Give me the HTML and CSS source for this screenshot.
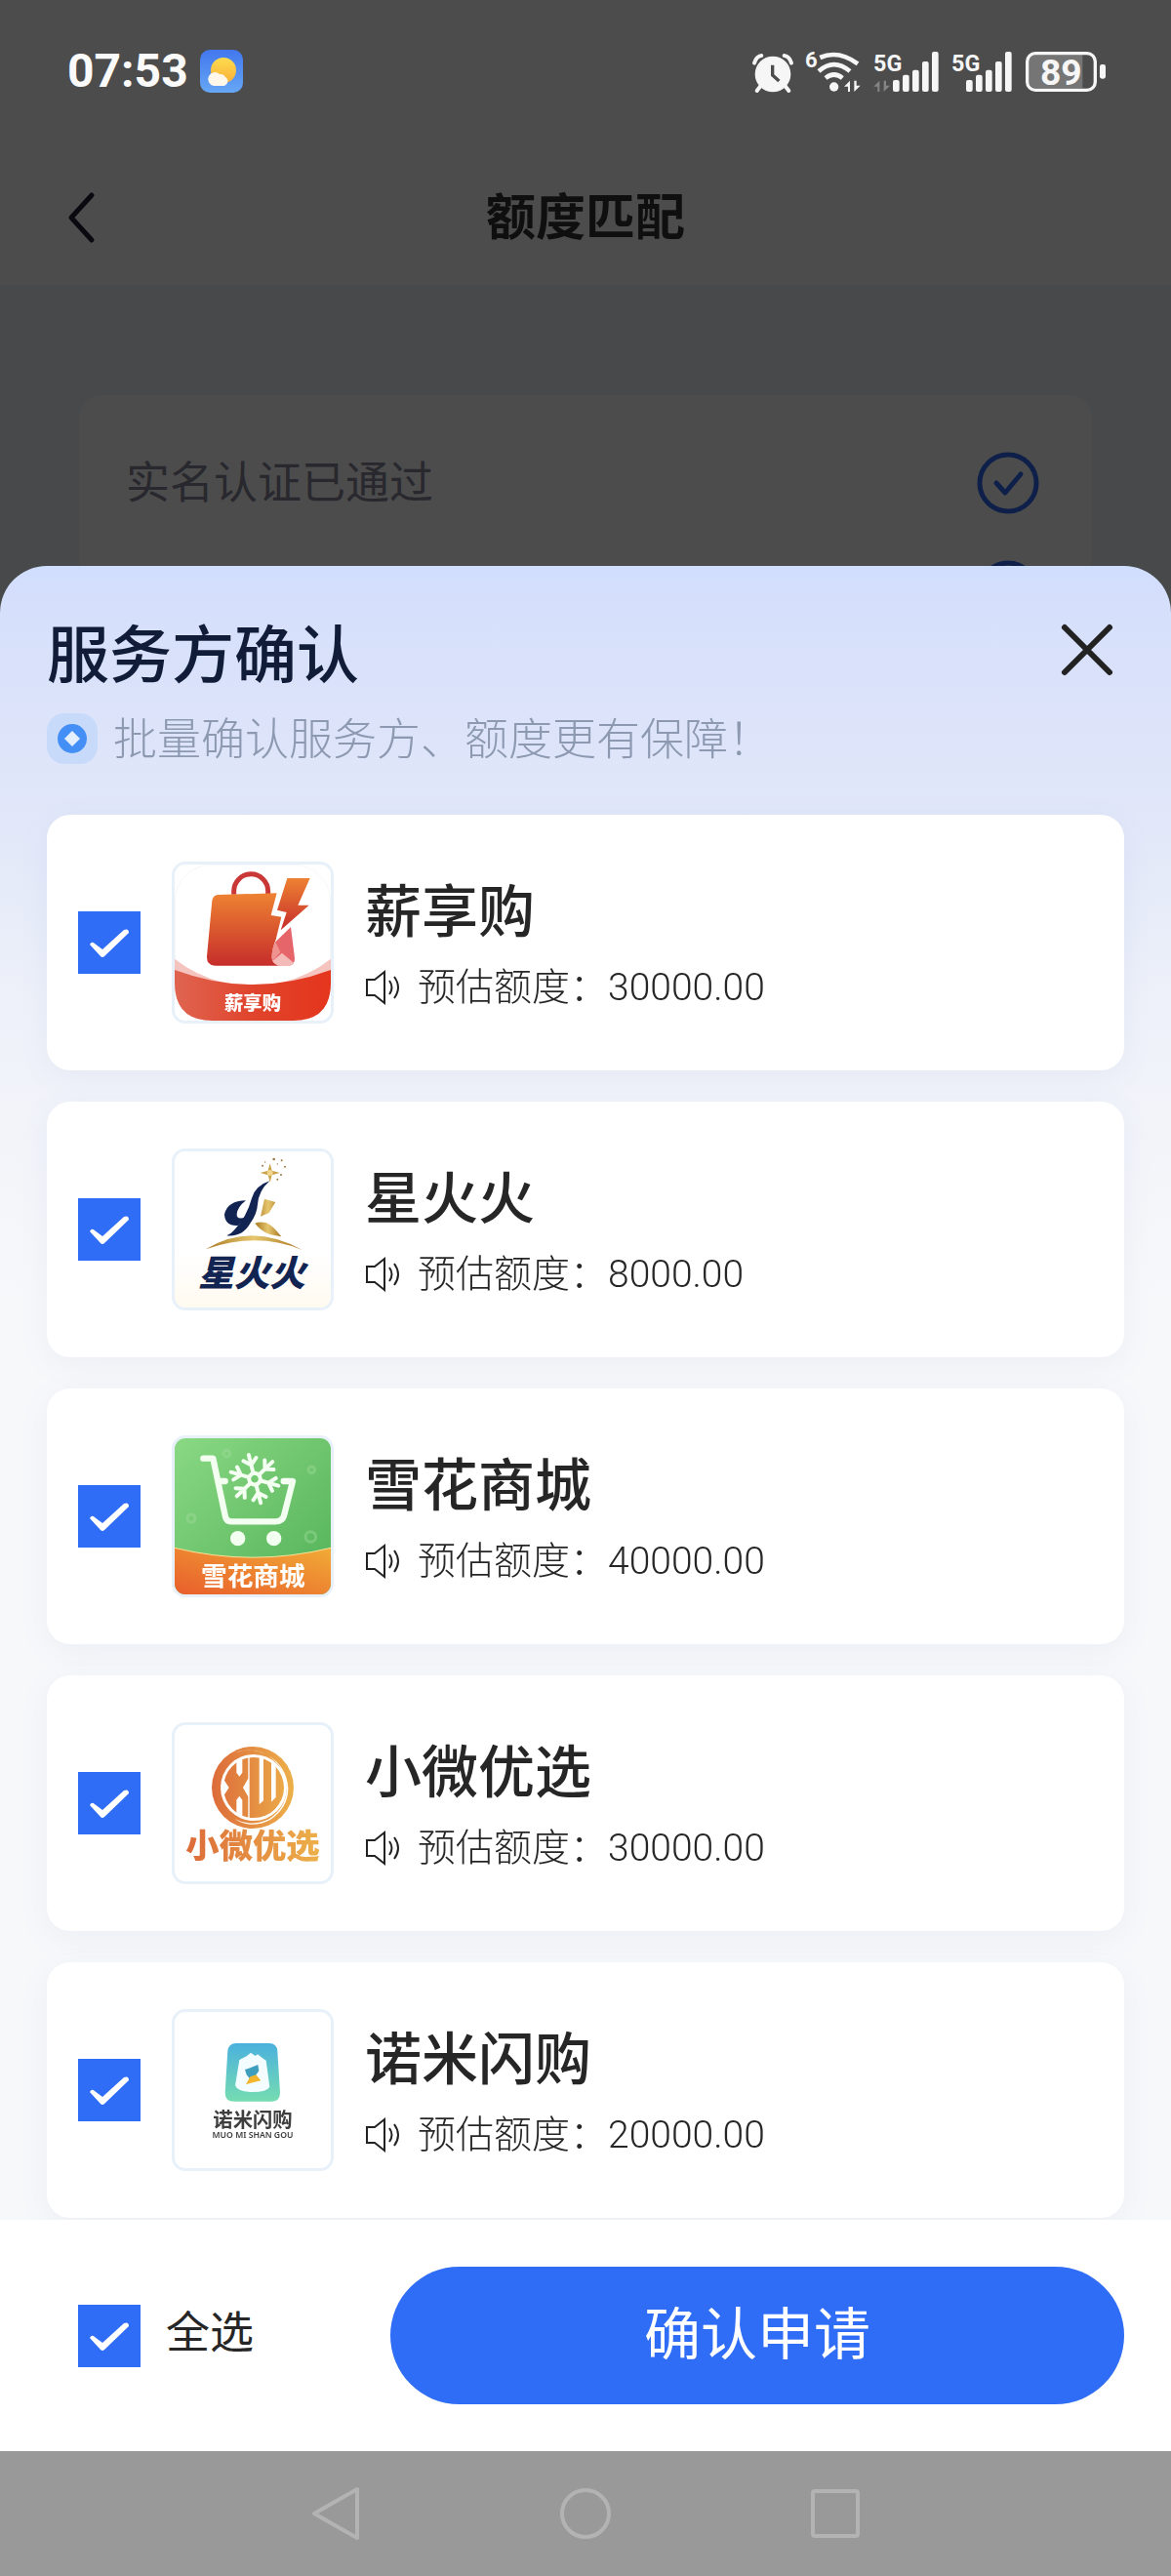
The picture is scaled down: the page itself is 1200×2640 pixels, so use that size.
FILE: index.html
```
<!DOCTYPE html>
<html lang="zh-CN">
<head>
    <meta charset="UTF-8">
    <meta name="viewport" content="width=device-width, initial-scale=1.0">
    <title>额度匹配</title>
    <link rel="stylesheet" href="styles.css">
</head>
<body>

    <!-- Status bar -->
    <div class="status-bar">
        <div class="status-left">
            <span class="time">07:53</span>
            <svg class="weather" viewBox="0 0 44 44">
                <defs>
                    <linearGradient id="sky" x2="0" y2="1"><stop stop-color="#4277ee"/><stop offset="1" stop-color="#66a7f5"/></linearGradient>
                    <linearGradient id="sun" x2="0" y2="1"><stop stop-color="#ffdc4e"/><stop offset="1" stop-color="#f7b03a"/></linearGradient>
                </defs>
                <rect width="44" height="44" rx="10" fill="url(#sky)"/>
                <circle cx="24" cy="21" r="13" fill="url(#sun)"/>
                <path d="M14 37a7 7 0 1 1 6-12 6 6 0 0 1 6 3 5 5 0 0 1-1 9z" fill="#fff8ea"/>
            </svg>
        </div>
        <div class="status-right">
            <svg width="42" height="45" viewBox="98 60 126 135">
                <circle cx="161" cy="135" r="55" fill="#f6f6f6"/>
                <path d="M104 101q6-21 22-23M218 101q-6-21-22-23M123 172l-11 14M199 172l11 14" stroke="#f6f6f6" stroke-width="12" stroke-linecap="round" fill="none"/>
                <path d="M160 107v31l20 18" stroke="#4c4c4c" stroke-width="10" fill="none"/>
            </svg>
            <svg width="58" height="45" viewBox="260 60 174 135">
                <text x="260" y="113" class="svg-num" font-size="66">6</text>
                <g fill="none" stroke="#f6f6f6" stroke-width="14">
                    <path d="M306 84q56-25 116 19"/>
                    <path d="M302 126q46-41 96 0"/>
                    <path d="M323 147q26-21 52 0"/>
                </g>
                <circle cx="349" cy="174" r="14" fill="#f6f6f6"/>
                <path d="M380 173l18-18v34h-6v-16zM411 155h7v15h12l-19 19z" fill="#f6f6f6"/>
            </svg>
            <svg width="68" height="45" viewBox="462 60 204 135">
                <text x="462" y="127" class="svg-num" font-size="70">5G</text>
                <path d="M463 173l18-18v34h-6v-16zM494 155h7v15h12l-19 19z" fill="#858585"/>
                <g fill="#f6f6f6">
                    <rect x="522" y="153" width="20" height="36" rx="6"/><rect x="552" y="137" width="20" height="52" rx="6"/>
                    <rect x="582" y="122" width="20" height="67" rx="6"/><rect x="612" y="96" width="20" height="93" rx="6"/>
                    <rect x="642" y="66" width="20" height="123" rx="6"/>
                </g>
            </svg>
            <svg width="63" height="45" viewBox="699 60 189 135">
                <text x="699" y="127" class="svg-num" font-size="70">5G</text>
                <g fill="#f6f6f6">
                    <rect x="744" y="153" width="20" height="36" rx="6"/><rect x="774" y="137" width="20" height="52" rx="6"/>
                    <rect x="804" y="122" width="20" height="67" rx="6"/><rect x="834" y="96" width="20" height="93" rx="6"/>
                    <rect x="864" y="66" width="20" height="123" rx="6"/>
                </g>
            </svg>
            <svg width="84" height="45" viewBox="930 60 252 135">
                <path d="M1108 76H965q-22 0-22 22v58q0 22 22 22h143z" fill="#757575"/>
                <rect x="938" y="71" width="209" height="113" rx="25" fill="none" stroke="#f6f6f6" stroke-width="10"/>
                <rect x="1161" y="105" width="18" height="44" rx="7" fill="#f6f6f6"/>
                <text x="1042" y="168" class="svg-num" font-size="112" text-anchor="middle">89</text>
            </svg>
        </div>
    </div>

    <!-- Page behind the sheet -->
    <header class="page-header">
        <button type="button" class="back" aria-label="返回">
            <svg width="32" height="54" viewBox="0 0 32 54"><path d="M26 4L5 27l21 23" fill="none" stroke="#242038" stroke-width="5" stroke-linecap="round" stroke-linejoin="round"/></svg>
        </button>
        <h1>额度匹配</h1>
    </header>
    <main class="page">
        <ul class="steps">
            <li>
                <span>实名认证已通过</span>
                <svg class="step-icon" viewBox="0 0 64 64"><circle cx="32" cy="32" r="29"/><path d="M20 32l9 10 16-19"/></svg>
            </li>
            <li>
                <svg class="step-icon" viewBox="0 0 64 64"><circle cx="32" cy="32" r="29"/><path d="M20 32l9 10 16-19"/></svg>
            </li>
        </ul>
    </main>

    <!-- Bottom sheet -->
    <div class="mask">
        <form class="sheet">
            <div class="sheet-head">
                <div class="title-row">
                    <h2>服务方确认</h2>
                    <button type="button" class="close" aria-label="关闭">
                        <svg width="54" height="54" viewBox="0 0 54 54"><path d="M4 4l46 46M50 4L4 50" stroke="#222" stroke-width="6" stroke-linecap="round"/></svg>
                    </button>
                </div>
                <p class="tip">
                    <svg width="52" height="52" viewBox="0 0 52 52">
                        <rect width="52" height="52" rx="18" fill="#c8daf9"/>
                        <circle cx="26" cy="26" r="15" fill="#448ff5"/>
                        <path d="M26 18l8 8-8 8-8-8z" fill="#e4effd"/>
                    </svg>
                    <span>批量确认服务方、额度更有保障！</span>
                </p>
            </div>

            <div class="list">
                <label class="item">
                    <input type="checkbox" class="check" checked>
                    <svg class="logo" viewBox="57 48 480 480">
                        <defs>
                            <linearGradient id="bag" x2="0" y2="1"><stop stop-color="#ee8232"/><stop offset="1" stop-color="#c62d2b"/></linearGradient>
                            <linearGradient id="band"><stop stop-color="#df6551"/><stop offset=".5" stop-color="#e0442c"/><stop offset="1" stop-color="#e5351d"/></linearGradient>
                        </defs>
                        <rect x="58" y="49" width="478" height="478" rx="112" fill="#fff" stroke="#f1f3f6" stroke-width="2"/>
                        <path d="M57 338Q120 388 210 412L190 425 57 380zM537 338Q474 388 384 412L400 425 537 380z" fill="#f6c4bf"/>
                        <path d="M57 372Q297 462 537 372v40q0 116-116 116H173Q57 528 57 412z" fill="url(#band)"/>
                        <path d="M239 140v-10a52 52 0 0 1 105 0v8" fill="none" stroke="#c93836" stroke-width="15"/>
                        <path d="M190 141l181-5-18 68 32 5-17 70q-14 34-12 58 3 16 20 22H181q-26-2-25-28l16-172q3-16 18-18z" fill="url(#bag)"/>
                        <path d="M367 286l47-46 12 95q2 23-24 25h-20q-26-6-26-31 1-26 11-43z" fill="#e5656a"/>
                        <path d="M367 286l15 31-24 28q-6-32 9-59z" fill="#ef9391"/>
                        <path d="M358 345l29-25 36 30q-7 10-21 10h-20q-16-3-24-15z" fill="#f4bab8"/>
                        <path d="M403 90h70l-37 83h34l-87 77 18-55-29-7z" fill="url(#bag)"/>
                        <text x="297" y="494" class="logo-text" font-size="58" fill="#fff" text-anchor="middle">薪享购</text>
                    </svg>
                    <span class="info">
                        <span class="name">薪享购</span>
                        <span class="quota"><svg class="horn" viewBox="0 0 38 38"><path d="M2 11h8l10-8v32l-10-8H2zM25 12q5 7 0 14M30 8q8 11 0 22"/></svg>预估额度：30000.00</span>
                    </span>
                </label>

                <label class="item">
                    <input type="checkbox" class="check" checked>
                    <svg class="logo" viewBox="57 60 480 480">
                        <defs>
                            <linearGradient id="cream" x2="0" y2="1"><stop offset=".65" stop-color="#fff"/><stop offset="1" stop-color="#fffaf0"/></linearGradient>
                            <linearGradient id="gold"><stop stop-color="#a87a25"/><stop offset=".5" stop-color="#e6c66e"/><stop offset="1" stop-color="#a67620"/></linearGradient>
                        </defs>
                        <rect x="57" y="60" width="480" height="480" fill="url(#cream)"/>
                        <path d="M349 151q-44 14-55 53-15 57-55 99-8 10-22 16 49 5 73-39 20-27 22-57 3-42 37-72z" fill="#122452"/>
                        <path d="M276 211q-56 1-66 42 1 38 42 35l22-25q-28 8-26-10 2-22 28-42z" fill="#122452"/>
                        <path d="M333 206l34 10-20 33-26 11zM304 281q12-6 34-2 18 6 47 43-16-3-36-7-30-12-45-34z" fill="url(#gold)"/>
                        <path d="M152 361q140-86 297 2-138-57-297-2z" fill="url(#gold)"/>
                        <path d="M350 97l6 22 24 7-24 7-6 22-6-22-24-7 24-7z" fill="#c9a24a"/>
                        <circle cx="350" cy="126" r="9" fill="#f0d68e"/>
                        <g fill="#9a7a42"><circle cx="362" cy="84" r="4"/><circle cx="386" cy="88" r="3"/><circle cx="396" cy="107" r="3"/><circle cx="373" cy="99" r="2"/><circle cx="384" cy="132" r="3"/><circle cx="327" cy="104" r="3"/><circle cx="373" cy="146" r="3"/><circle cx="335" cy="93" r="2"/></g>
                        <text x="294" y="475" class="logo-text" font-size="110" font-style="italic" fill="#122452" text-anchor="middle">星火火</text>
                    </svg>
                    <span class="info">
                        <span class="name">星火火</span>
                        <span class="quota"><svg class="horn" viewBox="0 0 38 38"><path d="M2 11h8l10-8v32l-10-8H2zM25 12q5 7 0 14M30 8q8 11 0 22"/></svg>预估额度：8000.00</span>
                    </span>
                </label>

                <label class="item">
                    <input type="checkbox" class="check" checked>
                    <svg class="logo" viewBox="57 42 480 480">
                        <defs>
                            <linearGradient id="green" x2="1" y2="1"><stop stop-color="#8ad884"/><stop offset="1" stop-color="#52b257"/></linearGradient>
                            <linearGradient id="orange" x1="1" x2="0" y2="1"><stop stop-color="#f1ab36"/><stop offset="1" stop-color="#e95e2c"/></linearGradient>
                            <g id="flake-arm"><path d="M0-17V-76M0-44l-20-18M0-44l20-18"/></g>
                        </defs>
                        <rect x="57" y="42" width="480" height="480" fill="url(#green)"/>
                        <g fill="none" stroke="#a5dfa0" stroke-width="9" opacity=".4"><circle cx="108" cy="288" r="12"/><circle cx="217" cy="89" r="10"/><circle cx="478" cy="139" r="10"/><circle cx="475" cy="345" r="16"/></g>
                        <path d="M57 379Q297 438 537 379v143H57z" fill="url(#orange)"/>
                        <path d="M57 379Q297 438 537 379" fill="none" stroke="#f8e39a" stroke-width="3"/>
                        <path d="M145 104h30l38 180q3 14 18 14h135q22 0 27-18l27-106h-28M191 174h21" fill="none" stroke="#f3fff1" stroke-width="19" stroke-linecap="round" stroke-linejoin="round"/>
                        <circle cx="251" cy="350" r="23" fill="#f3fff1"/><circle cx="362" cy="350" r="23" fill="#f3fff1"/>
                        <g transform="translate(303 167) rotate(-14)" fill="none" stroke="#f3fff1" stroke-width="12" stroke-linecap="round">
                            <path d="M0-20l17 10v20L0 20l-17-10v-20z"/>
                            <use href="#flake-arm"/><use href="#flake-arm" transform="rotate(60)"/><use href="#flake-arm" transform="rotate(120)"/>
                            <use href="#flake-arm" transform="rotate(180)"/><use href="#flake-arm" transform="rotate(240)"/><use href="#flake-arm" transform="rotate(300)"/>
                        </g>
                        <text x="298" y="494" class="logo-text logo-text-medium" font-size="80" fill="#fff" text-anchor="middle">雪花商城</text>
                    </svg>
                    <span class="info">
                        <span class="name">雪花商城</span>
                        <span class="quota"><svg class="horn" viewBox="0 0 38 38"><path d="M2 11h8l10-8v32l-10-8H2zM25 12q5 7 0 14M30 8q8 11 0 22"/></svg>预估额度：40000.00</span>
                    </span>
                </label>

                <label class="item">
                    <input type="checkbox" class="check" checked>
                    <svg class="logo" viewBox="57 54 480 480">
                        <defs>
                            <linearGradient id="xw" gradientUnits="userSpaceOnUse" x1="170" x2="424"><stop stop-color="#dc6b3a"/><stop offset="1" stop-color="#edb04a"/></linearGradient>
                            <linearGradient id="xwText"><stop stop-color="#dc6b3a"/><stop offset="1" stop-color="#edb04a"/></linearGradient>
                            <clipPath id="disc"><circle cx="300" cy="246" r="93"/></clipPath>
                        </defs>
                        <circle cx="297" cy="246" r="126" fill="url(#xw)"/>
                        <path d="M240 140q66-26 120 19 36 32 42 88-2 62-55 96-55 25-105 0 50 32 109 2 56-38 55-98-6-70-64-101-55-28-102-6z" fill="#fff"/>
                        <circle cx="300" cy="246" r="102" fill="#fff"/>
                        <g clip-path="url(#disc)" fill="url(#xw)">
                            <path d="M206 150h41v50l9 12 9-12v-50h18v68l-16 28 16 28v70h-18v-60l-9-12-9 12v60h-41v-70l18-28-18-28z"/>
                            <path d="M287 150h30v148l13-12V150h24v140l14-14V150h35v120l-60 80h-56z"/>
                        </g>
                        <text x="297" y="461" class="logo-text" font-size="103" fill="url(#xwText)" text-anchor="middle">小微优选</text>
                    </svg>
                    <span class="info">
                        <span class="name">小微优选</span>
                        <span class="quota"><svg class="horn" viewBox="0 0 38 38"><path d="M2 11h8l10-8v32l-10-8H2zM25 12q5 7 0 14M30 8q8 11 0 22"/></svg>预估额度：30000.00</span>
                    </span>
                </label>

                <label class="item">
                    <input type="checkbox" class="check" checked>
                    <svg class="logo" viewBox="57 51 480 480">
                        <defs>
                            <linearGradient id="mint" x2="0" y2="1"><stop stop-color="#4bb1dd"/><stop offset="1" stop-color="#75dcb1"/></linearGradient>
                        </defs>
                        <path d="M246 147h101q24 0 26 24l8 128q0 27-28 27H240q-28 0-28-27l8-128q3-24 26-24z" fill="url(#mint)"/>
                        <path d="M256 198l22-11 13-11 14 10 7-5 17 13 9 6 11 81q-8 16-52 16-46 0-54-20z" fill="#f3fdff"/>
                        <path d="M273 228l12-4 28-11 3 19-13 18-16 5-9-11z" fill="#3d9fbd"/>
                        <path d="M289 250l18-6 15 18-31 7-15 5z" fill="#f2b52c"/>
                        <text x="297" y="406" class="logo-text logo-text-medium" font-size="61" fill="#3e3e3e" text-anchor="middle">诺米闪购</text>
                        <text x="297" y="438" class="logo-pinyin" font-size="26" fill="#3e3e3e" text-anchor="middle">MUO MI SHAN GOU</text>
                    </svg>
                    <span class="info">
                        <span class="name">诺米闪购</span>
                        <span class="quota"><svg class="horn" viewBox="0 0 38 38"><path d="M2 11h8l10-8v32l-10-8H2zM25 12q5 7 0 14M30 8q8 11 0 22"/></svg>预估额度：20000.00</span>
                    </span>
                </label>
            </div>

            <div class="footer">
                <label class="select-all">
                    <input type="checkbox" class="check" checked>
                    <span>全选</span>
                </label>
                <button type="submit" class="submit">确认申请</button>
            </div>
        </form>

        <nav class="nav-bar">
            <button type="button" aria-label="后退"><svg viewBox="0 0 56 56"><path d="M50 3v50L6 28z"/></svg></button>
            <button type="button" aria-label="主页"><svg viewBox="0 0 56 56"><circle cx="28" cy="28" r="24"/></svg></button>
            <button type="button" aria-label="最近任务"><svg viewBox="0 0 56 56"><rect x="5" y="5" width="46" height="46" rx="2"/></svg></button>
        </nav>
    </div>

</body>
</html>
```
FILE: styles.css
```
* { box-sizing: border-box; }
body { margin: 0; min-height: 100vh; background: #f0f6fc; color: #262626; font-family: "Noto Sans CJK SC", "Noto Sans", sans-serif; overflow: hidden; }
h1, h2, p, ul { margin: 0; padding: 0; }
button { border: 0; padding: 0; background: none; font-family: inherit; }
svg { display: block; flex: none; overflow: visible; }

/* status bar */
.status-bar { display: flex; justify-content: space-between; align-items: center; height: 146px; padding: 0 66px 0 69px; background: #4c4c4c; position: relative; z-index: 2; }
.status-left, .status-right { display: flex; align-items: center; gap: 12px; }
.time { color: #fafafa; font-family: Roboto, sans-serif; font-size: 48px; font-weight: 700; line-height: 48px; }
.weather { width: 44px; height: 44px; }
.svg-num { font-family: Roboto, sans-serif; font-weight: 700; fill: #f6f6f6; }

/* page behind */
.page-header { display: grid; grid-template-columns: 1fr auto 1fr; align-items: center; height: 146px; padding: 0 68px; background: #fff; }
.page-header h1 { font-size: 51px; font-weight: 700; line-height: 72px; color: #353535; }
.back { justify-self: start; margin-top: 8px; }
.page { padding: 113px 81px; }
.steps { list-style: none; background: #fff; border-radius: 24px; padding: 34px 54px 34px 48px; }
.steps li { display: flex; align-items: center; height: 111px; font-size: 45px; color: #85859a; }
.steps span { padding-bottom: 6px; }
.step-icon { width: 64px; height: 64px; margin-left: auto; fill: none; stroke: #2f6df6; stroke-width: 5; stroke-linecap: round; stroke-linejoin: round; }

/* bottom sheet */
.mask { position: fixed; inset: 0; display: flex; flex-direction: column; justify-content: flex-end; background: rgba(0, 0, 0, 0.7); }
.sheet { border-radius: 48px 48px 0 0; overflow: hidden; background: linear-gradient(#d0defe 0, #d6dffb 40px, #e1e7f9 250px, #eef1f9 450px, #f7f8fa 750px); }
.sheet-head { padding: 44px 48px 52px; }
.title-row { display: flex; justify-content: space-between; align-items: center; height: 84px; }
.title-row h2 { font-size: 64px; font-weight: 500; line-height: 84px; color: #111c38; }
.close { margin-right: 11px; }
.tip { display: flex; align-items: center; gap: 16px; margin-top: 23px; font-size: 45px; font-weight: 300; line-height: 48px; color: #8c99b0; }
.tip span { padding-bottom: 4px; }

.list { display: flex; flex-direction: column; gap: 32px; padding: 0 48px 2px; }
.item { display: flex; align-items: center; gap: 32px; padding: 48px 32px; background: #fff; border-radius: 24px; box-shadow: 0 8px 32px rgba(80, 110, 190, 0.07); }
.check { appearance: none; flex: none; width: 64px; height: 64px; margin: 0; background: #2f6df6 url("data:image/svg+xml,%3Csvg xmlns='http://www.w3.org/2000/svg' viewBox='0 0 64 64'%3E%3Cpath d='M12 34q2-4 5-1l8 6 22-20q5-2 5 3L27 46q-2 2-4 0z' fill='white'/%3E%3C/svg%3E"); }
.logo { width: 166px; height: 166px; border: 3px solid #e8f1fa; border-radius: 14px; overflow: hidden; }
.logo-text { font-family: "Noto Sans CJK SC", sans-serif; font-weight: 900; }
.logo-text-medium { font-weight: 700; }
.logo-pinyin { font-family: "Noto Sans", sans-serif; font-weight: 600; }
.info { display: flex; flex-direction: column; gap: 14px; padding-bottom: 3px; }
.name { font-size: 58px; font-weight: 500; line-height: 80px; }
.quota { display: flex; align-items: center; font-family: Roboto, "Noto Sans CJK SC", sans-serif; font-size: 39px; font-weight: 300; line-height: 56px; }
.horn { width: 38px; height: 38px; margin-right: 16px; fill: none; stroke: #222; stroke-width: 2; }

.footer { display: flex; align-items: center; gap: 32px; padding: 48px 48px 48px 80px; background: #fff; position: relative; }
.select-all { display: flex; align-items: center; gap: 26px; width: 288px; font-size: 45px; line-height: 52px; }
.select-all span { padding-bottom: 12px; }
.submit { flex: 1; height: 141px; padding-bottom: 12px; border-radius: 71px; background: #2f6df6; color: #fff; font-size: 58px; }

/* system navigation */
.nav-bar { display: flex; justify-content: center; gap: 200px; height: 128px; background: #999; }
.nav-bar svg { width: 56px; height: 56px; fill: none; stroke: #b3b3b3; stroke-width: 4; stroke-linejoin: round; }
```
